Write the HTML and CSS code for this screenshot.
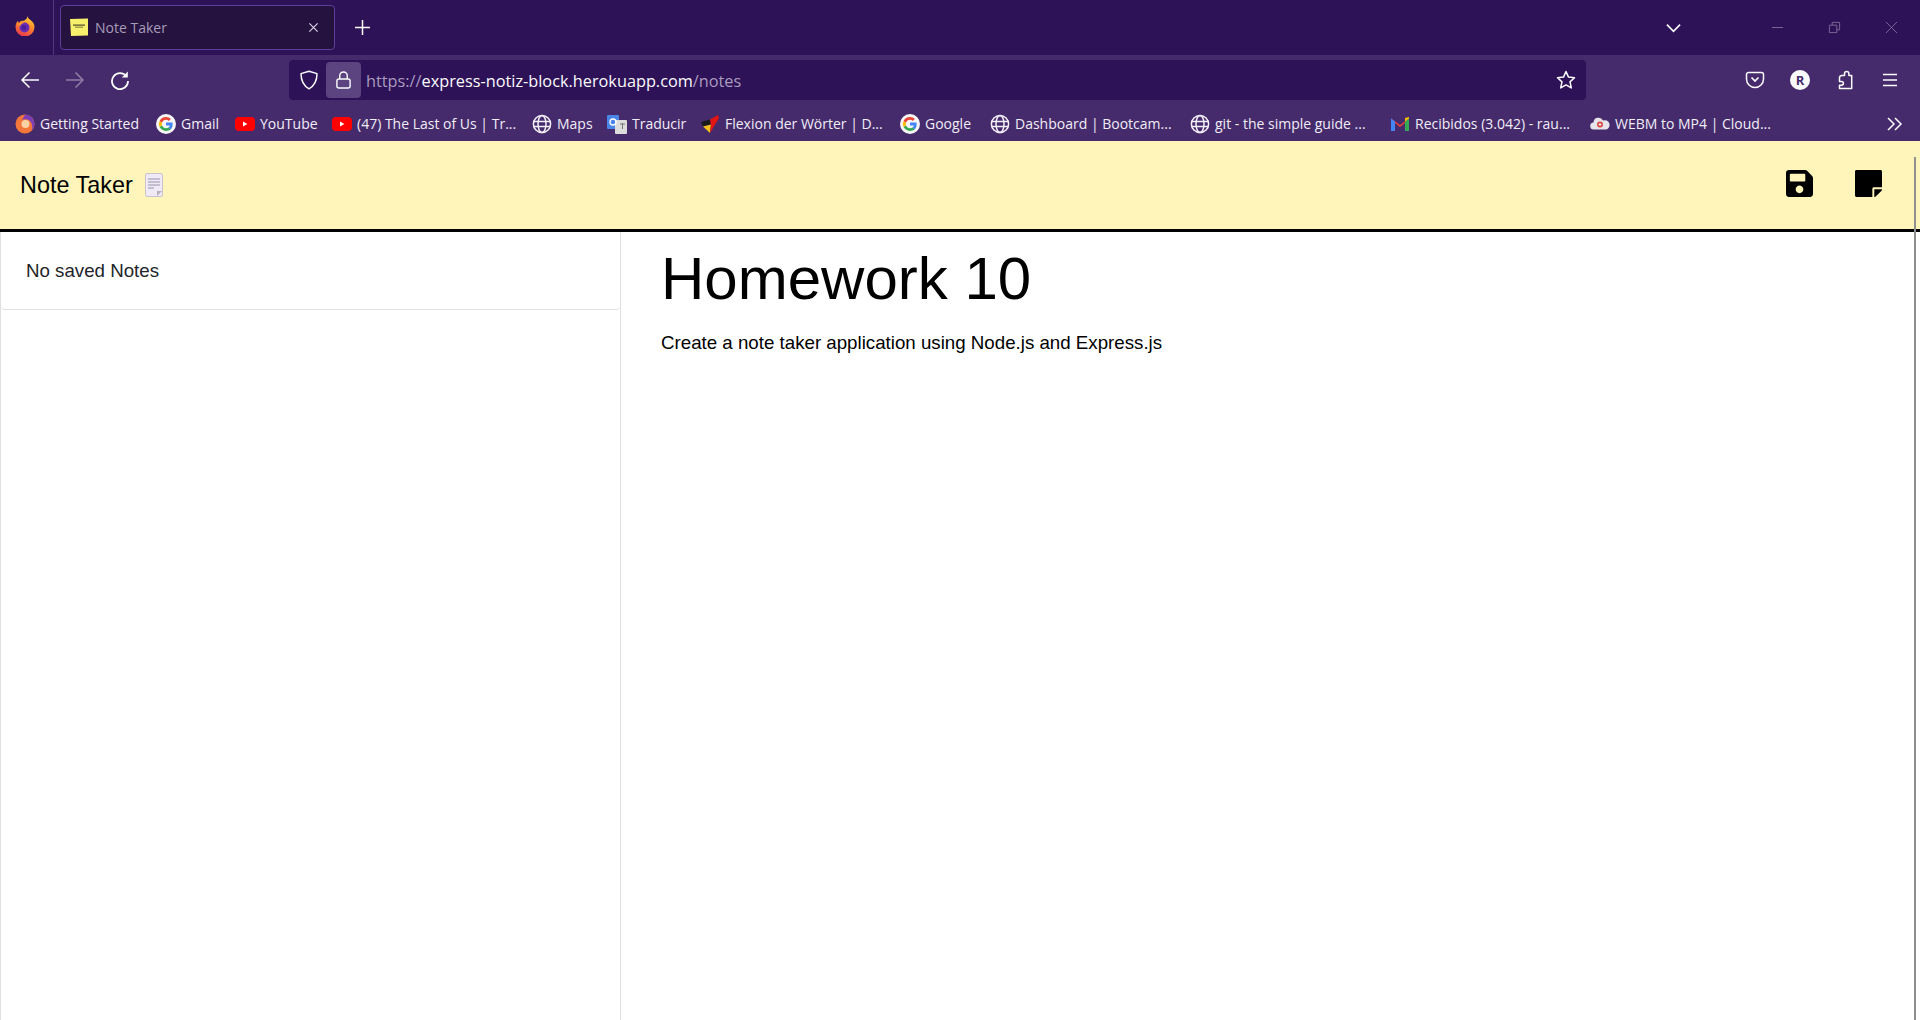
FILE: index.html

```html
<!DOCTYPE html>
<html lang="en">
<head>
  <meta charset="UTF-8">
  <meta name="viewport" content="width=device-width, initial-scale=1.0">
  <title>Note Taker</title>
  <link rel="stylesheet" href="styles.css">
</head>
<body>
  <svg class="defs" width="0" height="0">
    <defs>
      <linearGradient id="ffgrad" x1="0.7" y1="0" x2="0.3" y2="1">
        <stop offset="0" stop-color="#ffd23a"/>
        <stop offset=".45" stop-color="#ff8a2a"/>
        <stop offset="1" stop-color="#e8344e"/>
      </linearGradient>
    </defs>
    <symbol id="globe" viewBox="0 0 20 20">
      <g fill="none" stroke="#f4f0fa" stroke-width="1.5">
        <circle cx="10" cy="10" r="8.6"/>
        <ellipse cx="10" cy="10" rx="4" ry="8.6"/>
        <path d="M1.500 7.400h17M1.500 12.600h17"/>
      </g>
    </symbol>
    <symbol id="google" viewBox="0 0 20 20">
      <circle cx="10" cy="10" r="10" fill="#f6f6f6"/>
      <path d="M16.600 10.200c0-.6 0-1.100-.1-1.600H10v3h3.800c-.2.9-.7 1.700-1.500 2.200l2.300 1.800c1.300-1.200 2-3.100 2-5.400z" fill="#4285f4"/>
      <path d="M10 17c1.900 0 3.500-.6 4.600-1.700l-2.300-1.800c-.6.400-1.400.7-2.300.7-1.900 0-3.400-1.200-4-3l-2.400 1.900C4.800 15.400 7.200 17 10 17z" fill="#34a853"/>
      <path d="M6 11.200c-.3-.8-.3-1.600 0-2.400L3.600 6.900c-.9 2-.9 4.200 0 6.200z" fill="#fbbc05"/>
      <path d="M10 5.800c1 0 2 .4 2.800 1.100l2-2C13.500 3.700 11.800 3 10 3 7.200 3 4.800 4.600 3.600 6.900L6 8.800c.6-1.800 2.100-3 4-3z" fill="#ea4335"/>
    </symbol>
    <symbol id="youtube" viewBox="0 0 20 20">
      <rect x="0" y="3" width="20" height="14" rx="4" fill="#f00"/>
      <path d="M8 7.500v5l4.400-2.500z" fill="#fff"/>
    </symbol>
    <symbol id="ff" viewBox="0 0 20 20">
      <path d="M12.500 0c.3 2.500 2.200 3 3.500 4.500 2 1.800 3.500 3.500 3.500 6.500A9.500 9.500 0 0 1 .5 11c0-2.600 1-4.700 2.500-6.300.1 1 .5 1.700 1 2.200C5 5 6.800 4.300 8.500 4.800 10.500 4 12.500 2.500 12.500 0z" fill="url(#ffgrad)"/>
      <circle cx="9.500" cy="11.500" r="5" fill="#6a2bb5"/>
      <circle cx="9" cy="11.500" r="2.500" fill="#4a1f96"/>
      <path d="M3.500 8c1.500-1.500 4-2 6.500-1-2.500 0-4.500 1-5 3.500-.8-.7-1.300-1.500-1.500-2.500z" fill="#ff9a2e"/>
    </symbol>
  </svg>

  <div class="tabstrip">
    <div class="ff-slot">
      <svg class="ic20" viewBox="0 0 20 20"><use href="#ff"/></svg>
    </div>
    <div class="tab">
      <svg class="tab-icon" viewBox="0 0 18 18">
        <path d="M0 1l18-.5V17.500L1 18z" fill="#f7f06c"/>
        <path d="M3 6.500h12v1.200H3zM5 8.800h8v.8H5z" fill="#55502a"/>
      </svg>
      <span class="tab-title">Note Taker</span>
      <svg class="tab-close" viewBox="0 0 12 12"><path d="M1.500 1.500l9 9M10.500 1.500l-9 9" stroke="#d8d0e4" stroke-width="1.300" fill="none"/></svg>
    </div>
    <svg class="new-tab" viewBox="0 0 16 16"><path d="M8 0v16M0 8h16" stroke="#fbfbfe" stroke-width="1.600" fill="none"/></svg>
    <svg class="tab-list" viewBox="0 0 16 10"><path d="M1 1.500l7 7 7-7" stroke="#fbfbfe" stroke-width="1.800" fill="none"/></svg>
    <div class="win-btns">
      <svg viewBox="0 0 14 14"><path d="M1 7h12" stroke="#7d6a99" stroke-width="1" fill="none"/></svg>
      <svg viewBox="0 0 14 14"><path d="M1.500 4.500h8v8h-8zM4.500 4.500v-3h8v8h-3" stroke="#7d6a99" stroke-width="1" fill="none"/></svg>
      <svg viewBox="0 0 14 14"><path d="M1 1l12 12M13 1L1 13" stroke="#7d6a99" stroke-width="1" fill="none"/></svg>
    </div>
  </div>

  <div class="toolbar">
    <svg class="nav-btn" viewBox="0 0 20 20"><path d="M19 10H2M9.500 2.500L2 10l7.500 7.500" stroke="#fbfbfe" stroke-width="1.500" fill="none"/></svg>
    <svg class="nav-btn dim" viewBox="0 0 20 20"><path d="M1 10h17M10.500 2.500L18 10l-7.500 7.500" stroke="#fbfbfe" stroke-width="1.500" fill="none"/></svg>
    <svg class="nav-btn" viewBox="0 0 20 20"><path d="M16.500 6.500A8 8 0 1 0 18 11" stroke="#fbfbfe" stroke-width="1.800" fill="none"/><path d="M17.800 1.500v6h-6z" fill="#fbfbfe"/></svg>

    <div class="urlbar">
      <svg class="shield" viewBox="0 0 20 20"><path d="M10 1.200l8 2.400c0 7-2 12-8 15.200C4 15.600 2 10.600 2 3.600z" stroke="#fbfbfe" stroke-width="1.500" fill="none" stroke-linejoin="round"/></svg>
      <div class="lock-box">
        <svg viewBox="0 0 18 20"><path d="M5 9V5.500a4 4 0 0 1 8 0V9" stroke="#fbfbfe" stroke-width="1.500" fill="none"/><rect x="2" y="9" width="14" height="9.500" rx="2.200" stroke="#fbfbfe" stroke-width="1.500" fill="none"/></svg>
      </div>
      <div class="url"><span class="dim-url">https://</span>express-notiz-block.herokuapp.com<span class="dim-url">/notes</span></div>
      <svg class="star" viewBox="0 0 20 20"><path d="M10 1.500l2.500 5.600 6 .7-4.500 4.100 1.300 6L10 14.900l-5.300 3 1.300-6L1.500 7.800l6-.7z" stroke="#fbfbfe" stroke-width="1.500" fill="none" stroke-linejoin="round"/></svg>
    </div>

    <div class="tool-right">
      <svg viewBox="0 0 20 20"><path d="M3.500 2.500h13a2 2 0 0 1 2 2V9a8.500 8.500 0 0 1-17 0V4.500a2 2 0 0 1 2-2z" stroke="#fbfbfe" stroke-width="1.500" fill="none"/><path d="M6.500 7.500L10 11l3.500-3.500" stroke="#fbfbfe" stroke-width="1.700" fill="none"/></svg>
      <div class="avatar">R</div>
      <svg viewBox="0 0 20 20"><path d="M8 5.500h3V3.800a2.200 2.200 0 0 1 4.400 0v1.700h2.800v13H6v-3.300h2a1.900 1.900 0 0 0 0-3.800H6V8a2.500 2.500 0 0 1 2-2.500z" transform="translate(-1.500 0)" stroke="#fbfbfe" stroke-width="1.500" fill="none" stroke-linejoin="round"/></svg>
      <svg viewBox="0 0 20 20"><path d="M3 4.500h14M3 10h14M3 15.500h14" stroke="#fbfbfe" stroke-width="1.600" fill="none"/></svg>
    </div>
  </div>

  <div class="bookmarks">
    <div class="bm bm-started"><svg class="bm-icon" viewBox="0 0 20 20"><circle cx="10" cy="10" r="9.500" fill="#f4763b"/><path d="M10 .5a9.500 9.500 0 0 1 9.500 9.500c0 3-1.500 5-3 6.500 1-2 1.500-7-2-10-2-1.500-6-1.500-7.500-.5C8 4 9.500 2 10 .5z" fill="#7c3fb8"/><circle cx="10.500" cy="10" r="4" fill="#fbd2a4"/></svg>Getting Started</div>
    <div class="bm bm-gmail"><svg class="bm-icon" viewBox="0 0 20 20"><use href="#google"/></svg>Gmail</div>
    <div class="bm bm-youtube"><svg class="bm-icon" viewBox="0 0 20 20"><use href="#youtube"/></svg>YouTube</div>
    <div class="bm bm-long"><svg class="bm-icon" viewBox="0 0 20 20"><use href="#youtube"/></svg>(47) The Last of Us | Tr...</div>
    <div class="bm bm-maps"><svg class="bm-icon" viewBox="0 0 20 20"><use href="#globe"/></svg>Maps</div>
    <div class="bm bm-traducir"><svg class="bm-icon" viewBox="0 0 20 20"><rect x="0" y="1" width="12" height="14" rx="1" fill="#4a86e8"/><rect x="8" y="6" width="12" height="14" rx="1" fill="#dcdcdc"/><path d="M13 10h5M15.500 9v6" stroke="#777" fill="none"/><circle cx="6" cy="8" r="3" fill="none" stroke="#fff" stroke-width="1.300"/></svg>Traducir</div>
    <div class="bm bm-long"><svg class="bm-icon" viewBox="0 0 20 20"><path d="M1 8l9-2.500 1 5-8 2z" fill="#1a1a1a"/><path d="M3 12.500l8-2-1 8.500z" fill="#f2c11d"/><path d="M10 5.500L18 1l1 3-9 15 1-8.500z" fill="#e21414"/></svg>Flexion der Wörter | D...</div>
    <div class="bm bm-google"><svg class="bm-icon" viewBox="0 0 20 20"><use href="#google"/></svg>Google</div>
    <div class="bm bm-long"><svg class="bm-icon" viewBox="0 0 20 20"><use href="#globe"/></svg>Dashboard | Bootcam...</div>
    <div class="bm bm-long"><svg class="bm-icon" viewBox="0 0 20 20"><use href="#globe"/></svg>git - the simple guide ...</div>
    <div class="bm bm-long"><svg class="bm-icon" viewBox="0 0 20 20"><path d="M1 17V4.500l9 6.500 9-6.500V17h-4V9l-5 4-5-4v8z" fill="#ea4335"/><path d="M1 17V4.500L5 7.500V17z" fill="#4285f4"/><path d="M15 17V7.500l4-3V17z" fill="#34a853"/><path d="M15 7.500l4-3V3l-4 1z" fill="#fbbc05"/></svg>Recibidos (3.042) - rau...</div>
    <div class="bm bm-long"><svg class="bm-icon" viewBox="0 0 20 20"><path d="M4 15.500a3.500 3.500 0 0 1-.5-7 5 5 0 0 1 9.500-2 4.500 4.500 0 0 1 3.500 9z" fill="#e8e4ec"/><circle cx="10" cy="10.500" r="3" fill="#d8453a"/><path d="M10 9v3M8.500 10.500h3" stroke="#fff" fill="none"/></svg>WEBM to MP4 | Cloud...</div>
    <svg class="bm-more" viewBox="0 0 16 14"><path d="M1 1l6 6-6 6M8 1l6 6-6 6" stroke="#fbfbfe" stroke-width="1.500" fill="none"/></svg>
  </div>

  <nav class="navbar">
    <div class="brand">Note Taker
      <svg class="memo" viewBox="0 0 18 24">
        <rect x=".5" y=".5" width="17" height="23" rx="1.500" fill="#efeaf6" stroke="#c9c3cf"/>
        <path d="M3 6h12M3 9h12M3 12h12M3 15h6" stroke="#9a92ad" stroke-width="1" fill="none"/>
        <path d="M12 23v-5h5z" fill="#b8b0bd"/>
      </svg>
    </div>
    <div class="nav-icons">
      <svg viewBox="0 0 448 512"><path d="M433.900 129.900l-83.900-83.900A48 48 0 0 0 316.100 32H48C21.500 32 0 53.500 0 80v352c0 26.500 21.500 48 48 48h352c26.500 0 48-21.500 48-48V163.900a48 48 0 0 0-14.100-34zM224 416c-35.300 0-64-28.700-64-64 0-35.300 28.700-64 64-64s64 28.700 64 64c0 35.300-28.700 64-64 64zm96-304.500V212c0 6.600-5.400 12-12 12H76c-6.600 0-12-5.400-12-12V108c0-6.600 5.400-12 12-12h228.500c3.200 0 6.200 1.300 8.500 3.500l3.500 3.500c2.300 2.300 3.500 5.300 3.500 8.500z"/></svg>
      <svg viewBox="0 0 448 512"><path d="M312 320h136V56c0-13.300-10.700-24-24-24H24C10.700 32 0 42.700 0 56v400c0 13.300 10.700 24 24 24h264V344c0-13.200 10.800-24 24-24zm129 55l-98 98c-4.500 4.500-10.600 7-17 7h-6V352h128v6.100c0 6.300-2.500 12.400-7 16.900z"/></svg>
    </div>
  </nav>

  <main class="page">
    <aside class="sidebar">
      <div class="note-item">No saved Notes</div>
    </aside>
    <section class="editor">
      <h1 class="note-title">Homework 10</h1>
      <p class="note-text">Create a note taker application using Node.js and Express.js</p>
    </section>
    <div class="scrollbar"></div>
  </main>
</body>
</html>
```

FILE: styles.css

```css
* {
  box-sizing: border-box;
}
html, body {
  height: 100%;
}
body {
  margin: 0;
  background: #fff;
  color: #000;
  font-family: "Liberation Sans", sans-serif;
  overflow: hidden;
  display: flex;
  flex-direction: column;
}
.defs {
  position: absolute;
}

/* browser chrome */
.tabstrip {
  height: 55px;
  background: #2e1257;
  display: flex;
  align-items: center;
  position: relative;
}
.ff-slot {
  width: 54px;
  height: 55px;
  padding: 16px 0 0 15px;
  border-right: 1px solid #4d3775;
}
.ic20 {
  display: block;
  width: 20px;
  height: 20px;
}
.tab {
  width: 275px;
  height: 45px;
  margin: -1px 0 0 6px;
  padding: 0 15px 0 9px;
  display: flex;
  align-items: center;
  background: #25123f;
  border: 1px solid #5c3f9a;
  border-radius: 4px;
}
.tab-icon {
  width: 18px;
  height: 18px;
  margin-right: 7px;
}
.tab-title {
  flex: 1;
  padding-top: 1px;
  color: #a79cb8;
  font: 14px "Open Sans", sans-serif;
}
.tab-close {
  width: 11px;
  height: 11px;
}
.new-tab {
  width: 15px;
  height: 15px;
  margin-left: 20px;
}
.tab-list {
  width: 15px;
  height: 10px;
  margin-left: auto;
}
.win-btns {
  display: flex;
  gap: 44px;
  margin: 0 22px 0 90px;
}
.win-btns svg {
  width: 13px;
  height: 13px;
}

.toolbar {
  height: 48px;
  background: #452b6b;
  padding: 5px 0 3px 20px;
  display: flex;
  align-items: center;
}
.nav-btn {
  width: 20px;
  height: 20px;
  margin-right: 25px;
}
.nav-btn.dim {
  opacity: .4;
}
.urlbar {
  width: 1297px;
  height: 40px;
  margin-left: 134px;
  background: #2e1257;
  border-radius: 4px;
  display: flex;
  align-items: center;
  padding: 0 10px;
}
.shield {
  width: 20px;
  height: 20px;
  flex: none;
}
.lock-box {
  width: 35px;
  height: 36px;
  margin-left: 7px;
  background: #5b4480;
  border-radius: 4px;
  display: flex;
  align-items: center;
  justify-content: center;
}
.lock-box svg {
  width: 17px;
  height: 20px;
}
.url {
  flex: 1;
  margin-left: 5px;
  padding-top: 1px;
  color: #fbfbfe;
  font: 16.300px "Open Sans", sans-serif;
  white-space: nowrap;
}
.dim-url {
  color: #a99bbf;
}
.star {
  width: 20px;
  height: 20px;
  flex: none;
}
.tool-right {
  flex: 1;
  display: flex;
  align-items: center;
  justify-content: flex-end;
  gap: 25px;
  padding-right: 20px;
}
.tool-right svg {
  width: 20px;
  height: 20px;
}
.avatar {
  width: 20px;
  height: 20px;
  border-radius: 50%;
  background: #fbfbfe;
  color: #452b6b;
  font: bold 13px/20px "Open Sans", sans-serif;
  text-align: center;
}

.bookmarks {
  height: 38px;
  background: #452b6b;
  padding: 3px 15px 0;
  display: flex;
  align-items: center;
  color: #f1edf7;
  font: 14px "Open Sans", sans-serif;
  white-space: nowrap;
}
.bm {
  display: flex;
  align-items: center;
  flex: none;
}
.bm-started { width: 141px; }
.bm-gmail { width: 79px; }
.bm-youtube { width: 97px; }
.bm-maps { width: 75px; }
.bm-traducir { width: 93px; }
.bm-google { width: 90px; }
.bm-long { width: 200px; }
.bm-icon {
  width: 20px;
  height: 20px;
  margin-right: 5px;
  flex: none;
}
.bm-more {
  width: 16px;
  height: 14px;
  margin-left: auto;
  margin-right: 2px;
}

/* the page itself */
.navbar {
  height: 91px;
  background: #fff5ba;
  border-bottom: 3px solid #000;
  padding: 0 38px 0 20px;
  display: flex;
  align-items: center;
  justify-content: space-between;
}
.brand {
  font-size: 23.400px;
  display: flex;
  align-items: center;
  gap: 12px;
}
.memo {
  width: 18px;
  height: 24px;
}
.nav-icons {
  display: flex;
  gap: 42px;
  margin-top: -3px;
}
.nav-icons svg {
  width: 27px;
  height: 31px;
}

.page {
  flex: 1;
  display: flex;
  position: relative;
}
.sidebar {
  width: 621px;
  flex: none;
  border-left: 1px solid #dfdfdf;
  border-right: 1px solid #dfdfdf;
}
.note-item {
  height: 78px;
  padding: 1px 0 0 25px;
  display: flex;
  align-items: center;
  color: #212529;
  font-size: 18.720px;
  border-bottom: 1px solid #dfdfdf;
  border-radius: 0 0 4px 4px;
}
.editor {
  flex: 1;
  padding: 0 0 0 40px;
}
.note-title {
  margin: 12px 0 0;
  font-size: 60px;
  font-weight: 400;
  line-height: 70px;
}
.note-text {
  margin: 17px 0 0;
  font-size: 18.720px;
  line-height: 24px;
}
.scrollbar {
  position: absolute;
  top: -75px;
  right: 4px;
  bottom: 0;
  width: 2px;
  background: #8f8f8f;
}
```
